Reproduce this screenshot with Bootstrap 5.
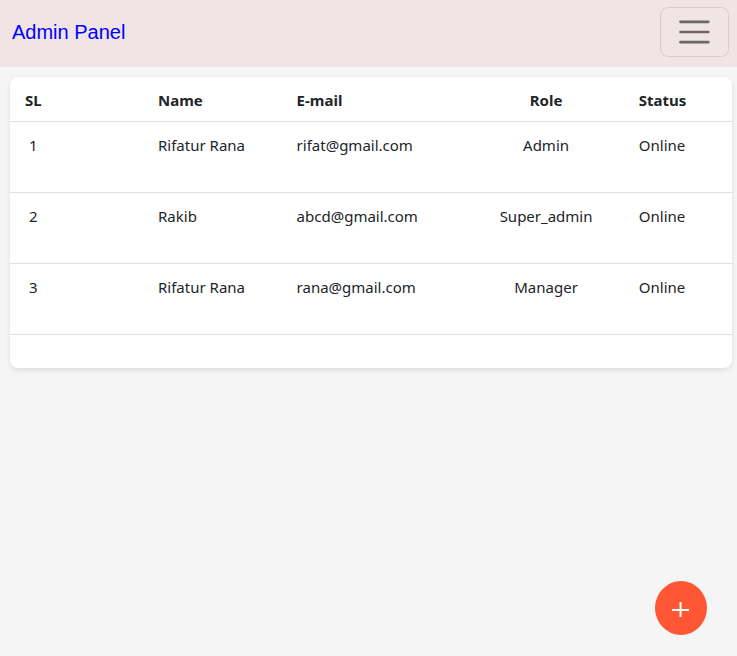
<!DOCTYPE html>
<html lang="en">
<head>
<meta charset="utf-8">
<meta name="viewport" content="width=device-width, initial-scale=1">
<title>Admin Panel</title>
<link href="https://cdn.jsdelivr.net/npm/bootstrap@5.3.0/dist/css/bootstrap.min.css" rel="stylesheet">
<style>
  body { background: #f5f5f5; font-family: "Segoe UI", "Noto Sans", sans-serif; font-size: 15px; line-height: 24px; }
  .admin-bar { background: #f0e4e4; padding: 7px 8px 10px 12px; }
  .admin-bar .navbar-brand { color: #00f; font: 20px/30px "Liberation Sans", Arial, sans-serif; }
  .admin-bar .navbar-toggler { width: 69px; height: 50px; padding: 0; border-radius: 8px; border-color: #d9cdcd; }
  .admin-bar .navbar-toggler svg { width: 38px; height: 38px; }
  .user-panel { margin: 10px 5px 0 10px; padding-bottom: 33px; border-radius: 8px; box-shadow: 0 2px 5px rgba(0, 0, 0, .1); }
  .user-table { table-layout: fixed; color: #212529; }
  .user-table th, .user-table td { padding: 11px 0 9px; }
  .user-table td { height: 71px; }
  .col-sl { width: 20.5%; }
  .col-name { width: 19.2%; }
  .col-mail { width: 21.7%; }
  .col-role { width: 25.7%; }
  .user-table th:first-child { padding-left: 15px; }
  .user-table td:first-child { padding-left: 19px; }
  .add-btn { right: 30px; bottom: 21px; width: 52px; height: 54px; background: #ff5733; }
</style>
<script src="https://cdn.jsdelivr.net/npm/bootstrap@5.3.0/dist/js/bootstrap.bundle.min.js" defer></script>
</head>
<body class="min-vh-100">
<nav class="navbar admin-bar">
  <a class="navbar-brand p-0 m-0" href="#">Admin Panel</a>
  <button class="navbar-toggler d-flex align-items-center justify-content-center" type="button" aria-label="Toggle navigation">
    <svg viewBox="0 0 30 30" aria-hidden="true"><path d="M3.500 7h22M3.500 15h22M3.500 23h22" fill="none" stroke="#6c6767" stroke-width="2" stroke-linecap="round"/></svg>
  </button>
</nav>
<main class="user-panel bg-white">
  <table class="table user-table mb-0 bg-transparent">
    <colgroup><col class="col-sl"><col class="col-name"><col class="col-mail"><col class="col-role"><col></colgroup>
    <thead>
      <tr><th scope="col" class="bg-transparent">SL</th><th scope="col" class="bg-transparent">Name</th><th scope="col" class="bg-transparent">E-mail</th><th scope="col" class="text-center bg-transparent">Role</th><th scope="col" class="bg-transparent">Status</th></tr>
    </thead>
    <tbody>
      <tr><td>1</td><td>Rifatur Rana</td><td>rifat@gmail.com</td><td class="text-center">Admin</td><td>Online</td></tr>
      <tr><td>2</td><td>Rakib</td><td>abcd@gmail.com</td><td class="text-center">Super_admin</td><td>Online</td></tr>
      <tr><td>3</td><td>Rifatur Rana</td><td>rana@gmail.com</td><td class="text-center">Manager</td><td>Online</td></tr>
    </tbody>
  </table>
</main>
<button class="add-btn position-fixed rounded-circle border-0 p-0 d-flex align-items-center justify-content-center" type="button" aria-label="Add user">
  <svg width="18" height="18" viewBox="0 0 18 18" aria-hidden="true"><path d="M0 11h17M8.500 3v15" fill="none" stroke="#fff" stroke-width="2"/></svg>
</button>
</body>
</html>
